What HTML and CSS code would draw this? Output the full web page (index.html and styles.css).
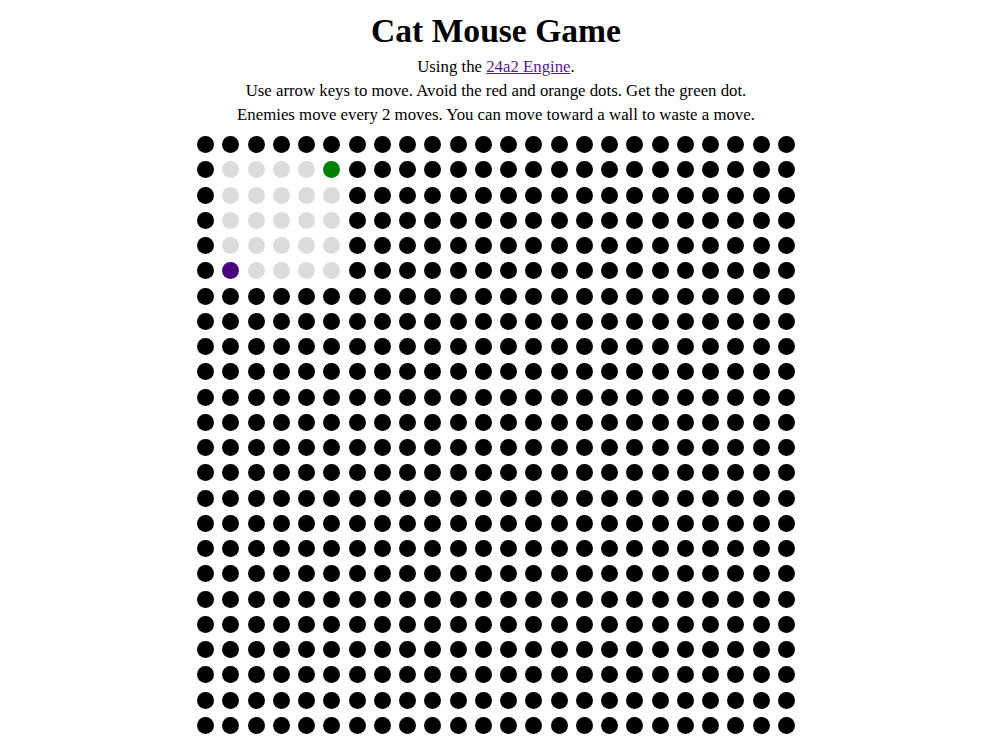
FILE: index.html
```html
<!DOCTYPE html>
<html>
<head>
<meta charset="utf-8">
<title>Cat Mouse Game</title>
<link rel="stylesheet" href="styles.css">
</head>
<body>
<div class="page">
  <h1 class="title">Cat Mouse Game</h1>
  <p class="line">Using the <a class="link" href="#">24a2 Engine</a>.</p>
  <p class="line">Use arrow keys to move. Avoid the red and orange dots. Get the green dot.</p>
  <p class="line">Enemies move every 2 moves. You can move toward a wall to waste a move.</p>
  <div class="board">
    <div class="row"><i></i><i></i><i></i><i></i><i></i><i></i><i></i><i></i><i></i><i></i><i></i><i></i><i></i><i></i><i></i><i></i><i></i><i></i><i></i><i></i><i></i><i></i><i></i><i></i></div>
    <div class="row"><i></i><i class="g"></i><i class="g"></i><i class="g"></i><i class="g"></i><i class="goal"></i><i></i><i></i><i></i><i></i><i></i><i></i><i></i><i></i><i></i><i></i><i></i><i></i><i></i><i></i><i></i><i></i><i></i><i></i></div>
    <div class="row"><i></i><i class="g"></i><i class="g"></i><i class="g"></i><i class="g"></i><i class="g"></i><i></i><i></i><i></i><i></i><i></i><i></i><i></i><i></i><i></i><i></i><i></i><i></i><i></i><i></i><i></i><i></i><i></i><i></i></div>
    <div class="row"><i></i><i class="g"></i><i class="g"></i><i class="g"></i><i class="g"></i><i class="g"></i><i></i><i></i><i></i><i></i><i></i><i></i><i></i><i></i><i></i><i></i><i></i><i></i><i></i><i></i><i></i><i></i><i></i><i></i></div>
    <div class="row"><i></i><i class="g"></i><i class="g"></i><i class="g"></i><i class="g"></i><i class="g"></i><i></i><i></i><i></i><i></i><i></i><i></i><i></i><i></i><i></i><i></i><i></i><i></i><i></i><i></i><i></i><i></i><i></i><i></i></div>
    <div class="row"><i></i><i class="player"></i><i class="g"></i><i class="g"></i><i class="g"></i><i class="g"></i><i></i><i></i><i></i><i></i><i></i><i></i><i></i><i></i><i></i><i></i><i></i><i></i><i></i><i></i><i></i><i></i><i></i><i></i></div>
    <div class="row"><i></i><i></i><i></i><i></i><i></i><i></i><i></i><i></i><i></i><i></i><i></i><i></i><i></i><i></i><i></i><i></i><i></i><i></i><i></i><i></i><i></i><i></i><i></i><i></i></div>
    <div class="row"><i></i><i></i><i></i><i></i><i></i><i></i><i></i><i></i><i></i><i></i><i></i><i></i><i></i><i></i><i></i><i></i><i></i><i></i><i></i><i></i><i></i><i></i><i></i><i></i></div>
    <div class="row"><i></i><i></i><i></i><i></i><i></i><i></i><i></i><i></i><i></i><i></i><i></i><i></i><i></i><i></i><i></i><i></i><i></i><i></i><i></i><i></i><i></i><i></i><i></i><i></i></div>
    <div class="row"><i></i><i></i><i></i><i></i><i></i><i></i><i></i><i></i><i></i><i></i><i></i><i></i><i></i><i></i><i></i><i></i><i></i><i></i><i></i><i></i><i></i><i></i><i></i><i></i></div>
    <div class="row"><i></i><i></i><i></i><i></i><i></i><i></i><i></i><i></i><i></i><i></i><i></i><i></i><i></i><i></i><i></i><i></i><i></i><i></i><i></i><i></i><i></i><i></i><i></i><i></i></div>
    <div class="row"><i></i><i></i><i></i><i></i><i></i><i></i><i></i><i></i><i></i><i></i><i></i><i></i><i></i><i></i><i></i><i></i><i></i><i></i><i></i><i></i><i></i><i></i><i></i><i></i></div>
    <div class="row"><i></i><i></i><i></i><i></i><i></i><i></i><i></i><i></i><i></i><i></i><i></i><i></i><i></i><i></i><i></i><i></i><i></i><i></i><i></i><i></i><i></i><i></i><i></i><i></i></div>
    <div class="row"><i></i><i></i><i></i><i></i><i></i><i></i><i></i><i></i><i></i><i></i><i></i><i></i><i></i><i></i><i></i><i></i><i></i><i></i><i></i><i></i><i></i><i></i><i></i><i></i></div>
    <div class="row"><i></i><i></i><i></i><i></i><i></i><i></i><i></i><i></i><i></i><i></i><i></i><i></i><i></i><i></i><i></i><i></i><i></i><i></i><i></i><i></i><i></i><i></i><i></i><i></i></div>
    <div class="row"><i></i><i></i><i></i><i></i><i></i><i></i><i></i><i></i><i></i><i></i><i></i><i></i><i></i><i></i><i></i><i></i><i></i><i></i><i></i><i></i><i></i><i></i><i></i><i></i></div>
    <div class="row"><i></i><i></i><i></i><i></i><i></i><i></i><i></i><i></i><i></i><i></i><i></i><i></i><i></i><i></i><i></i><i></i><i></i><i></i><i></i><i></i><i></i><i></i><i></i><i></i></div>
    <div class="row"><i></i><i></i><i></i><i></i><i></i><i></i><i></i><i></i><i></i><i></i><i></i><i></i><i></i><i></i><i></i><i></i><i></i><i></i><i></i><i></i><i></i><i></i><i></i><i></i></div>
    <div class="row"><i></i><i></i><i></i><i></i><i></i><i></i><i></i><i></i><i></i><i></i><i></i><i></i><i></i><i></i><i></i><i></i><i></i><i></i><i></i><i></i><i></i><i></i><i></i><i></i></div>
    <div class="row"><i></i><i></i><i></i><i></i><i></i><i></i><i></i><i></i><i></i><i></i><i></i><i></i><i></i><i></i><i></i><i></i><i></i><i></i><i></i><i></i><i></i><i></i><i></i><i></i></div>
    <div class="row"><i></i><i></i><i></i><i></i><i></i><i></i><i></i><i></i><i></i><i></i><i></i><i></i><i></i><i></i><i></i><i></i><i></i><i></i><i></i><i></i><i></i><i></i><i></i><i></i></div>
    <div class="row"><i></i><i></i><i></i><i></i><i></i><i></i><i></i><i></i><i></i><i></i><i></i><i></i><i></i><i></i><i></i><i></i><i></i><i></i><i></i><i></i><i></i><i></i><i></i><i></i></div>
    <div class="row"><i></i><i></i><i></i><i></i><i></i><i></i><i></i><i></i><i></i><i></i><i></i><i></i><i></i><i></i><i></i><i></i><i></i><i></i><i></i><i></i><i></i><i></i><i></i><i></i></div>
    <div class="row"><i></i><i></i><i></i><i></i><i></i><i></i><i></i><i></i><i></i><i></i><i></i><i></i><i></i><i></i><i></i><i></i><i></i><i></i><i></i><i></i><i></i><i></i><i></i><i></i></div>
  </div>
</div>
</body>
</html>
```

FILE: styles.css
```css
html, body {
  margin: 0;
  padding: 0;
  background: #fff;
  color: #000;
  font-family: "Liberation Serif", "Times New Roman", serif;
}

.page {
  width: 992px;
  display: flex;
  flex-direction: column;
  align-items: center;
  text-align: center;
}

.title {
  font-size: 33.6px;
  font-weight: bold;
  line-height: normal;
  margin: 12px 0 0;
}

.line {
  font-size: 16.8px;
  line-height: 24px;
  margin: 0;
}

.line:first-of-type {
  margin-top: 5px;
}

.link {
  color: #551a8b;
  text-decoration: underline;
}

.board {
  margin-top: 5px;
  display: flex;
  flex-direction: column;
}

.row {
  display: flex;
}

.row i {
  width: 25.25px;
  height: 25.25px;
  display: flex;
  align-items: center;
  justify-content: center;
}

.row i::before {
  content: "";
  width: 16.8px;
  height: 16.8px;
  border-radius: 50%;
  background: #000;
}

.row i.g::before {
  background: #dcdcdc;
}

.row i.goal::before {
  background: #008000;
}

.row i.player::before {
  background: #4b0082;
}
```
